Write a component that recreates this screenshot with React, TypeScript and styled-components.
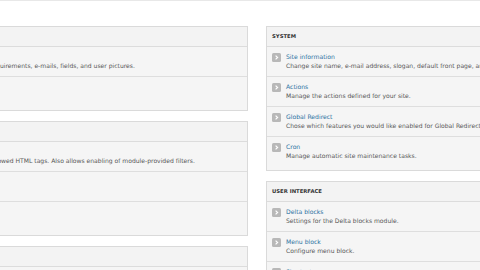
import React from "react";
import styled, { createGlobalStyle } from "styled-components";

const GlobalStyle = createGlobalStyle`
  html, body {
    margin: 0;
    padding: 0;
    background: #ffffff;
    overflow: hidden;
  }
  body {
    font-family: "DejaVu Sans", "Liberation Sans", sans-serif;
    color: #555;
  }
`;

type Item = { title: string; description: string };
type PanelData = { heading: string; items: Item[] };

const leftPanels: PanelData[] = [
  {
    heading: "People",
    items: [
      {
        title: "Account settings",
        description:
          "Configure default behavior of users, including registration requirements, e-mails, fields, and user pictures.",
      },
      { title: "IP address blocking", description: "Manage blocked IP addresses." },
    ],
  },
  {
    heading: "Content authoring",
    items: [
      {
        title: "Text formats",
        description:
          "Configure how content input by users is filtered, including allowed HTML tags. Also allows enabling of module-provided filters.",
      },
      { title: "Wysiwyg profiles", description: "Configure client-side editors." },
      { title: "Pathauto", description: "Configure URL aliases." },
    ],
  },
  {
    heading: "Media",
    items: [{ title: "File system", description: "Tell Drupal where to store files." }],
  },
];

const rightPanels: PanelData[] = [
  {
    heading: "System",
    items: [
      {
        title: "Site information",
        description:
          "Change site name, e-mail address, slogan, default front page, and number of posts per page, error pages.",
      },
      { title: "Actions", description: "Manage the actions defined for your site." },
      {
        title: "Global Redirect",
        description: "Chose which features you would like enabled for Global Redirect",
      },
      { title: "Cron", description: "Manage automatic site maintenance tasks." },
    ],
  },
  {
    heading: "User interface",
    items: [
      { title: "Delta blocks", description: "Settings for the Delta blocks module." },
      { title: "Menu block", description: "Configure menu block." },
      { title: "Shortcuts", description: "Add and modify shortcut sets." },
    ],
  },
];

// the screenshot is a crop: the left column starts off-screen
const Page = styled.div`
  border-top: 1px solid #e8e8e8;
  padding-top: 25px;
  margin-left: -207px;
  display: grid;
  grid-template-columns: 455px 455px;
  column-gap: 18px;
  align-items: start;
`;

const Column = styled.div`
  display: flex;
  flex-direction: column;
  gap: 10px;
`;

const Panel = styled.section`
  border: 1px solid #dadada;
  background: #f5f5f5;
  padding-bottom: 3px;
`;

const PanelHeader = styled.h3`
  margin: 0;
  height: 19px;
  line-height: 19px;
  padding: 0 5px;
  font-size: 5.3px;
  font-weight: bold;
  text-transform: uppercase;
  color: #333;
  background: #f3f3f3;
  border-bottom: 1px solid #dcdcdc;
`;

const Row = styled.div<{ $last: boolean }>`
  box-sizing: border-box;
  height: 30px;
  padding: 5px 5px 0;
  display: grid;
  grid-template-columns: 9px 1fr;
  column-gap: 5px;
  border-bottom: ${(p) => (p.$last ? "none" : "1px solid #dedede")};
`;

const Text = styled.div`
  display: flex;
  flex-direction: column;
  white-space: nowrap;
`;

const Title = styled.a`
  font-size: 6.1px;
  line-height: 9px;
  color: #2c72a2;
  text-decoration: none;
`;

const Description = styled.span`
  font-size: 6.05px;
  line-height: 9px;
  color: #585858;
`;

const IconBox = styled.svg`
  margin-top: 0.5px;
  display: block;
`;

const ArrowIcon = () => (
  <IconBox width="9" height="9" viewBox="0 0 9 9">
    <rect x="0" y="0" width="9" height="9" rx="1.5" fill="#b8b8b8" />
    <path d="M3.6 2.6 L5.6 4.5 L3.6 6.4" fill="none" stroke="#ffffff" strokeWidth="1.2" />
  </IconBox>
);

const AdminPanel = ({ data }: { data: PanelData }) => (
  <Panel>
    <PanelHeader>{data.heading}</PanelHeader>
    {data.items.map((item, i) => (
      <Row key={item.title} $last={i === data.items.length - 1}>
        <ArrowIcon />
        <Text>
          <Title href="#">{item.title}</Title>
          <Description>{item.description}</Description>
        </Text>
      </Row>
    ))}
  </Panel>
);

export default function App() {
  return (
    <>
      <GlobalStyle />
      <Page>
        <Column>
          {leftPanels.map((p) => (
            <AdminPanel key={p.heading} data={p} />
          ))}
        </Column>
        <Column>
          {rightPanels.map((p) => (
            <AdminPanel key={p.heading} data={p} />
          ))}
        </Column>
      </Page>
    </>
  );
}
